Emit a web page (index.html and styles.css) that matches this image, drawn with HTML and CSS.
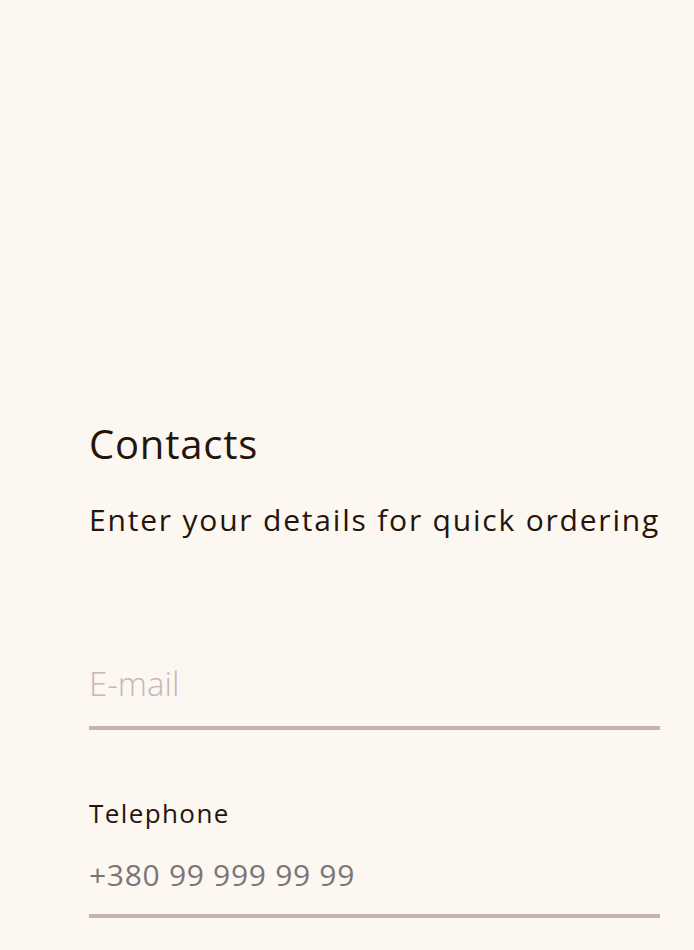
FILE: index.html
```html
<!DOCTYPE html>
<html lang="en">
<head>
<meta charset="utf-8">
<title>Contacts</title>
<link rel="stylesheet" href="styles.css">
</head>
<body>
<main class="page">
  <section class="contacts">
    <h2 class="title">Contacts</h2>
    <p class="subtitle">Enter your details for quick ordering</p>
    <div class="field field-email">
      <input class="input input-email" type="email" placeholder="E-mail">
    </div>
    <div class="field field-phone">
      <label class="label">Telephone</label>
      <input class="input input-phone" type="tel" placeholder="+380 99 999 99 99">
    </div>
  </section>
</main>
</body>
</html>
```

FILE: styles.css
```css
html, body {
  margin: 0;
  padding: 0;
  background: #fcf7f1;
}
body {
  font-family: "Open Sans", "Noto Sans", sans-serif;
  color: #24150b;
}
.page {
  padding: 416px 34px 0 89px;
}
.contacts {
  display: flex;
  flex-direction: column;
}
.title {
  margin: 0;
  font-size: 40px;
  font-weight: 400;
  line-height: 56px;
  letter-spacing: 0.8px;
}
.subtitle {
  margin: 28px 0 0;
  font-size: 30px;
  line-height: 40px;
  letter-spacing: 1.8px;
  font-weight: 400;
  white-space: nowrap;
}
.field {
  display: flex;
  flex-direction: column;
  border-bottom: 4px solid #c4b2b6;
}
.field-email {
  margin-top: 114px;
}
.field-phone {
  margin-top: 65px;
}
.label {
  font-size: 26px;
  line-height: 36px;
  letter-spacing: 1.4px;
}
.input {
  box-sizing: border-box;
  border: 0;
  outline: 0;
  background: transparent;
  margin: 0;
  font-family: "Open Sans", "Noto Sans", sans-serif;
  color: #24150b;
}
.input-email {
  font-size: 33px;
  font-weight: 300;
  height: 72px;
  padding: 0 0 13px;
}
.input-email::placeholder {
  color: #c7b5b9;
  opacity: 1;
}
.input-phone {
  font-size: 30px;
  font-weight: 400;
  letter-spacing: 0.7px;
  height: 83px;
  padding: 4px 0 0;
}
.input-phone::placeholder {
  color: #7b7675;
  opacity: 1;
}
```
